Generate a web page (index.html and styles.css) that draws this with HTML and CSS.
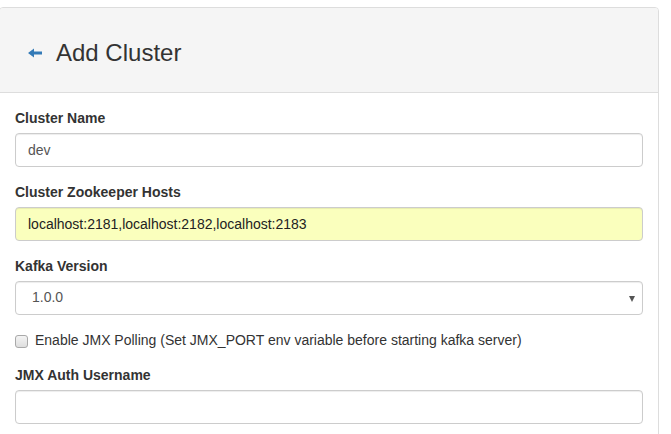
FILE: index.html
```html
<!DOCTYPE html>
<html>
<head>
<meta charset="utf-8">
<link rel="stylesheet" href="styles.css">
</head>
<body>
<div class="panel">
  <div class="panel-heading">
    <h3 class="title">
      <a class="back" href="#"><svg width="14" height="10" viewBox="0 0 14 10"><path d="M0 5 L6 0.5 L6 3.5 L14 3.5 L14 6.5 L6 6.5 L6 9.5 Z" fill="#337ab7"/></svg></a>
      <span>Add Cluster</span>
    </h3>
  </div>
  <div class="panel-body">
    <div class="form-group">
      <label class="lbl">Cluster Name</label>
      <input class="form-control" type="text" value="dev">
    </div>
    <div class="form-group">
      <label class="lbl">Cluster Zookeeper Hosts</label>
      <input class="form-control autofill" type="text" value="localhost:2181,localhost:2182,localhost:2183">
    </div>
    <div class="form-group">
      <label class="lbl">Kafka Version</label>
      <div class="select-wrap">
        <select class="form-control select">
          <option>1.0.0</option>
        </select>
      </div>
    </div>
    <div class="checkbox">
      <label class="check-label"><input type="checkbox" class="check"> Enable JMX Polling (Set JMX_PORT env variable before starting kafka server)</label>
    </div>
    <div class="form-group">
      <label class="lbl">JMX Auth Username</label>
      <input class="form-control" type="text" value="">
    </div>
  </div>
</div>
</body>
</html>
```
FILE: styles.css
```css
* { box-sizing: border-box; }
html, body {
  margin: 0;
  padding: 0;
  background: #fff;
  font-family: "Liberation Sans", Arial, sans-serif;
  font-size: 14px;
  line-height: 1.42857;
  color: #333;
  overflow: hidden;
}
.panel {
  margin: 7px 0 0 -1px;
  width: 660px;
  border: 1px solid #ddd;
  border-radius: 4px;
  background: #fff;
}
.panel-heading {
  height: 85px;
  background: #f5f5f5;
  border-bottom: 1px solid #ddd;
  border-radius: 3px 3px 0 0;
  display: flex;
  align-items: center;
  padding: 6px 15px 0 28px;
}
.title {
  margin: 0;
  font-size: 24px;
  font-weight: 500;
  line-height: 1.1;
  display: flex;
  align-items: center;
  color: #333;
}
.back {
  display: flex;
  align-items: center;
  margin-right: 14px;
  margin-top: 1px;
}
.panel-body {
  padding: 15px;
}
.form-group {
  margin-bottom: 15px;
}
.lbl {
  display: block;
  font-weight: bold;
  margin-bottom: 5px;
  height: 20px;
  padding-top: 1px;
}
.form-control {
  display: block;
  width: 100%;
  height: 34px;
  padding: 6px 12px;
  font-family: "Liberation Sans", Arial, sans-serif;
  font-size: 14px;
  line-height: 1.42857;
  color: #555;
  background: #fff;
  border: 1px solid #ccc;
  border-radius: 4px;
  box-shadow: inset 0 1px 1px rgba(0,0,0,.075);
  outline: none;
}
.autofill {
  background: #faffbd;
  color: #222;
}
.select-wrap {
  position: relative;
}
.select {
  appearance: none;
  -webkit-appearance: none;
  padding-left: 16px;
  color: #555;
}
.select-wrap::after {
  content: "";
  position: absolute;
  right: 8px;
  top: 15px;
  border-left: 3.5px solid transparent;
  border-right: 3.5px solid transparent;
  border-top: 6px solid #555;
}
.checkbox {
  margin: 0 0 15px;
  height: 20px;
}
.check-label {
  display: flex;
  align-items: center;
  font-weight: normal;
  color: #333;
  height: 20px;
  padding-top: 1px;
}
.check {
  appearance: none;
  -webkit-appearance: none;
  width: 13px;
  height: 13px;
  margin: 1px 7px 0 0;
  border: 1px solid #a9a9a9;
  border-radius: 3px;
  background: linear-gradient(#f4f4f4, #dedede);
}
```
